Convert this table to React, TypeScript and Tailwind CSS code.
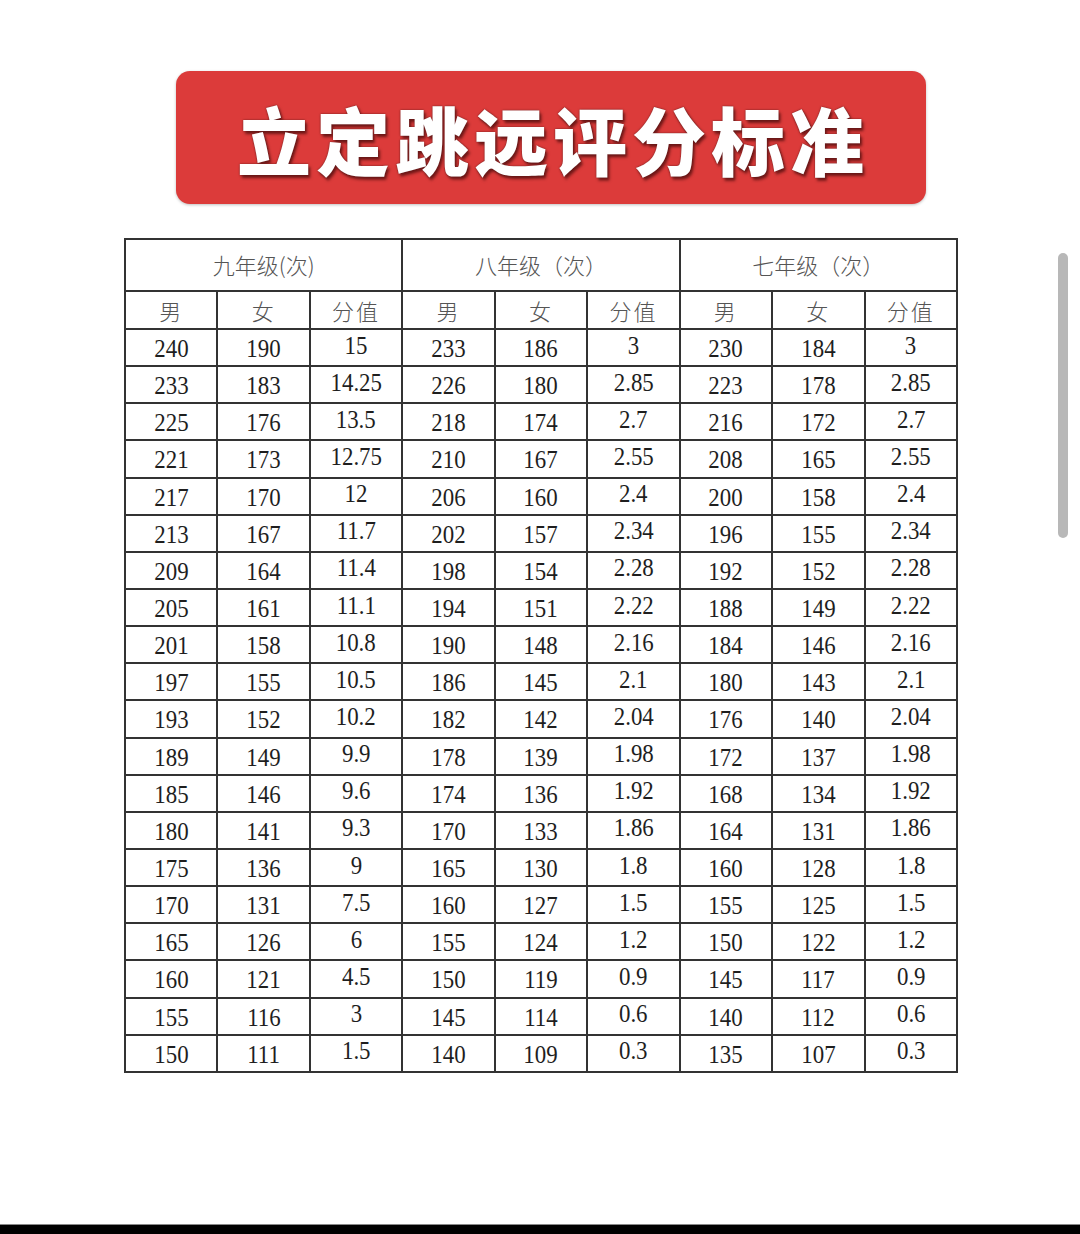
const grades = [
  { title: '九年级(次)' },
  { title: '八年级（次）' },
  { title: '七年级（次）' },
];

const rows: string[][] = [
  ['240', '190', '15', '233', '186', '3', '230', '184', '3'],
  ['233', '183', '14.25', '226', '180', '2.85', '223', '178', '2.85'],
  ['225', '176', '13.5', '218', '174', '2.7', '216', '172', '2.7'],
  ['221', '173', '12.75', '210', '167', '2.55', '208', '165', '2.55'],
  ['217', '170', '12', '206', '160', '2.4', '200', '158', '2.4'],
  ['213', '167', '11.7', '202', '157', '2.34', '196', '155', '2.34'],
  ['209', '164', '11.4', '198', '154', '2.28', '192', '152', '2.28'],
  ['205', '161', '11.1', '194', '151', '2.22', '188', '149', '2.22'],
  ['201', '158', '10.8', '190', '148', '2.16', '184', '146', '2.16'],
  ['197', '155', '10.5', '186', '145', '2.1', '180', '143', '2.1'],
  ['193', '152', '10.2', '182', '142', '2.04', '176', '140', '2.04'],
  ['189', '149', '9.9', '178', '139', '1.98', '172', '137', '1.98'],
  ['185', '146', '9.6', '174', '136', '1.92', '168', '134', '1.92'],
  ['180', '141', '9.3', '170', '133', '1.86', '164', '131', '1.86'],
  ['175', '136', '9', '165', '130', '1.8', '160', '128', '1.8'],
  ['170', '131', '7.5', '160', '127', '1.5', '155', '125', '1.5'],
  ['165', '126', '6', '155', '124', '1.2', '150', '122', '1.2'],
  ['160', '121', '4.5', '150', '119', '0.9', '145', '117', '0.9'],
  ['155', '116', '3', '145', '114', '0.6', '140', '112', '0.6'],
  ['150', '111', '1.5', '140', '109', '0.3', '135', '107', '0.3'],
];

const cjk = "font-['Noto_Sans_CJK_SC',sans-serif]";

export default function App() {
  return (
    <div className="relative flex min-h-[1234px] w-[1080px] flex-col bg-white">
      {/* 标题 */}
      <div className="ml-[176px] mt-[71px] flex h-[133px] w-[750px] items-center justify-center rounded-[14px] bg-[#dc3b3a] shadow-[0_1px_3px_rgba(0,0,0,0.25)]">
        <h1
          className={`${cjk} pl-[4px] text-[74px] font-black leading-none tracking-[5px] text-white [text-shadow:0_0_2px_#5a1a1a,2px_3px_3px_rgba(40,0,0,0.6)]`}
        >
          立定跳远评分标准
        </h1>
      </div>

      {/* 评分表 */}
      <table className="ml-[124px] mt-[34px] w-[834px] table-fixed border-collapse border-2 border-[#333]">
        <colgroup>
          {Array.from({ length: 9 }).map((_, i) => (
            <col key={i} className="w-[92.4px]" />
          ))}
        </colgroup>
        <thead>
          <tr className="h-[52px]">
            {grades.map((g) => (
              <th
                key={g.title}
                colSpan={3}
                className={`${cjk} border-2 border-[#333] pb-[2px] text-[22px] font-light text-[#555]`}
              >
                {g.title}
              </th>
            ))}
          </tr>
          <tr className="h-[38px]">
            {grades.map((g) =>
              ['男', '女', '分值'].map((h) => (
                <th
                  key={g.title + h}
                  className={`${cjk} border-2 border-[#333] text-[22px] font-light tracking-[2px] text-[#555]`}
                >
                  {h}
                </th>
              )),
            )}
          </tr>
        </thead>
        <tbody>
          {rows.map((r, ri) => (
            <tr key={ri} className="h-[37.15px]">
              {r.map((v, ci) => (
                <td
                  key={ci}
                  className={`border-2 border-[#333] p-0 text-center font-['Liberation_Serif',serif] text-[26px] leading-none text-[#1e1e1e] ${
                    ci % 3 === 2 ? 'pb-[4px]' : 'pt-[3px]'
                  }`}
                >
                  <span className="inline-block scale-x-[0.88]">{v}</span>
                </td>
              ))}
            </tr>
          ))}
        </tbody>
      </table>

      {/* 滚动条 */}
      <div className="absolute left-[1058px] top-[253px] h-[285px] w-[10px] rounded-full bg-[#b8b8b8]" />

      <div className="mt-auto h-[10px] border-t border-[#888] bg-black" />
    </div>
  );
}
